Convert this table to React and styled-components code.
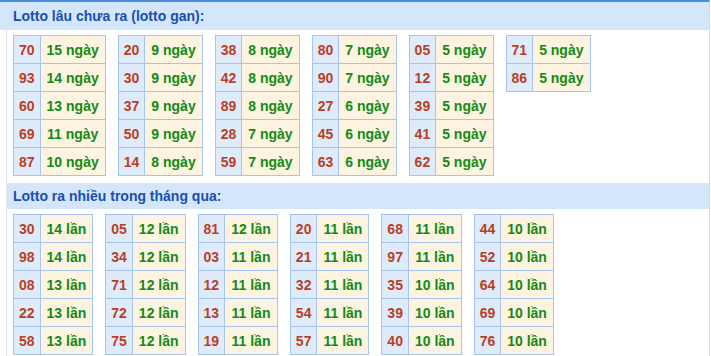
import React from "react";
import styled, { createGlobalStyle } from "styled-components";

const Global = createGlobalStyle`
  html, body { margin: 0; padding: 0; background: #fff; }
  body { font-family: "Liberation Sans", Arial, sans-serif; }
`;

const Panel = styled.div`
  width: 709px;
  border-top: 2px solid #4a8fe0;
  border-right: 1px solid #d6d9de;
`;

const MainTitle = styled.div`
  height: 28px;
  line-height: 29px;
  padding-left: 13px;
  background: #d3e6fb;
  color: #1a4fae;
  font-weight: bold;
  font-size: 14px;
`;

const Body = styled.div`
  margin-left: 6px;
  border-left: 1px solid #e1e4e8;
  padding-bottom: 4px;
`;

const SubTitle = styled.div`
  margin-top: 7px;
  height: 26px;
  line-height: 26px;
  padding-left: 6px;
  background: #d3e6fb;
  color: #1a4fae;
  font-weight: bold;
  font-size: 14px;
`;

const Group = styled.div`
  display: flex;
  align-items: flex-start;
  gap: 12px;
  padding: ${(p) => p.$top}px 0 0 6px;
`;

const Table = styled.table`
  border-collapse: collapse;
  font-size: 14px;
  font-weight: bold;
`;

const Row = styled.tr`
  height: 28px;
`;

const Num = styled.td`
  border: 1px solid #a6c4f0;
  background: #deebfb;
  color: #bb3f1f;
  text-align: center;
  padding: 0 5px;
  height: 26px;
`;

const Val = styled.td`
  border: 1px solid #a6c4f0;
  background: #fdf3e1;
  color: #148a16;
  text-align: center;
  padding: 0 6px;
  white-space: nowrap;
`;

const gan = [
  [["70", 15], ["93", 14], ["60", 13], ["69", 11], ["87", 10]],
  [["20", 9], ["30", 9], ["37", 9], ["50", 9], ["14", 8]],
  [["38", 8], ["42", 8], ["89", 8], ["28", 7], ["59", 7]],
  [["80", 7], ["90", 7], ["27", 6], ["45", 6], ["63", 6]],
  [["05", 5], ["12", 5], ["39", 5], ["41", 5], ["62", 5]],
  [["71", 5], ["86", 5]],
];

const nhieu = [
  [["30", 14], ["98", 14], ["08", 13], ["22", 13], ["58", 13]],
  [["05", 12], ["34", 12], ["71", 12], ["72", 12], ["75", 12]],
  [["81", 12], ["03", 11], ["12", 11], ["13", 11], ["19", 11]],
  [["20", 11], ["21", 11], ["32", 11], ["54", 11], ["57", 11]],
  [["68", 11], ["97", 11], ["35", 10], ["39", 10], ["40", 10]],
  [["44", 10], ["52", 10], ["64", 10], ["69", 10], ["76", 10]],
];

function Tables({ data, unit, top }) {
  return (
    <Group $top={top}>
      {data.map((col, i) => (
        <Table key={i}>
          <tbody>
            {col.map(([n, c]) => (
              <Row key={n}>
                <Num>{n}</Num>
                <Val>
                  {c} {unit}
                </Val>
              </Row>
            ))}
          </tbody>
        </Table>
      ))}
    </Group>
  );
}

export default function App() {
  return (
    <>
      <Global />
      <Panel>
        <MainTitle>Lotto lâu chưa ra (lotto gan):</MainTitle>
        <Body>
          <Tables data={gan} unit="ngày" top={5} />
          <SubTitle>Lotto ra nhiều trong tháng qua:</SubTitle>
          <Tables data={nhieu} unit="lần" top={5} />
        </Body>
      </Panel>
    </>
  );
}
